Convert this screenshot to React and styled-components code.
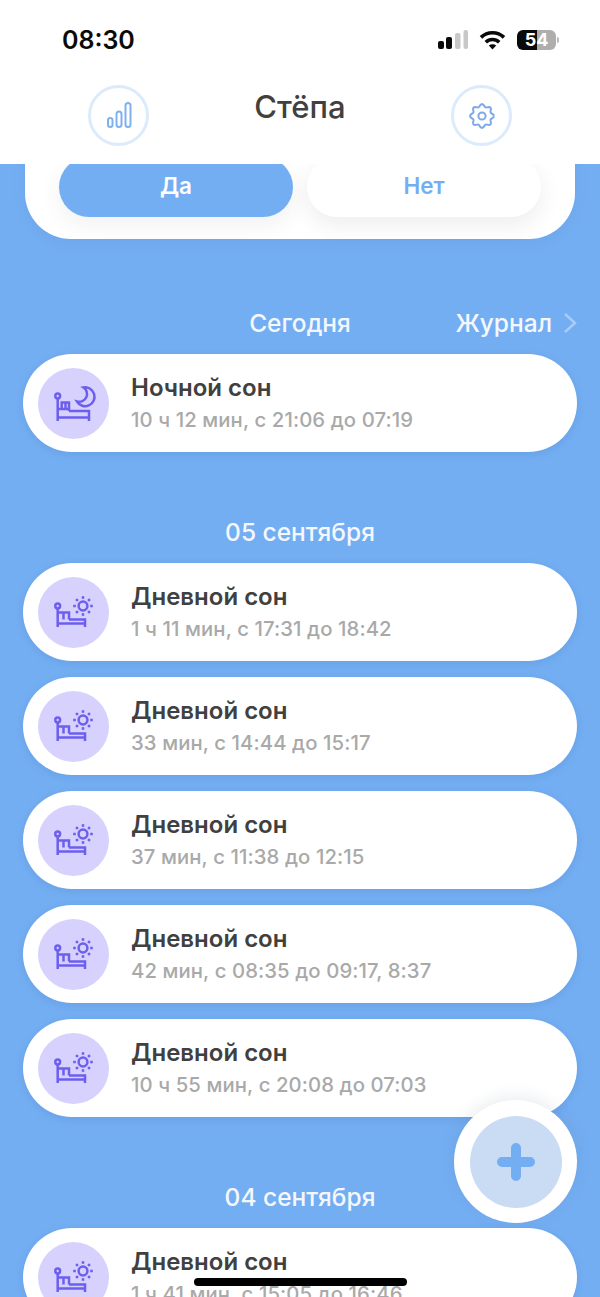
import React from "react";
import styled, { createGlobalStyle } from "styled-components";

const GlobalStyle = createGlobalStyle`
  html, body {
    margin: 0;
    padding: 0;
    overflow: hidden;
    background: #74aef2;
    font-family: "Inter", "Liberation Sans", sans-serif;
  }
`;

const Screen = styled.div`
  position: relative;
  width: 600px;
  height: 1297px;
  overflow: hidden;
  display: flex;
  flex-direction: column;
  background: #74aef2;
`;

const Header = styled.header`
  position: relative;
  z-index: 2;
  flex: 0 0 164px;
  background: #ffffff;
`;

const StatusBar = styled.div`
  height: 80px;
  padding: 0 44px 0 62px;
  display: flex;
  align-items: center;
  justify-content: space-between;
`;

const Clock = styled.span`
  font-size: 25px;
  font-weight: 600;
  color: #0a0a0a;
`;

const StatusIcons = styled.div`
  display: flex;
  align-items: center;
  gap: 11px;
`;

const Battery = styled.div`
  position: relative;
  width: 39px;
  height: 20px;
  border-radius: 6px;
  background: linear-gradient(90deg, #0a0a0a ${props => props.level}%, #aeaeae ${props => props.level}%);
  color: #ffffff;
  font-size: 18px;
  font-weight: 700;
  line-height: 20px;
  text-align: center;

  &::after {
    content: "";
    position: absolute;
    right: -3px;
    top: 7px;
    width: 2px;
    height: 6px;
    border-radius: 0 2px 2px 0;
    background: #b8b8b8;
  }
`;

const Nav = styled.nav`
  padding: 5px 88px 0;
  display: flex;
  justify-content: space-between;
  align-items: flex-start;
`;

const RoundButton = styled.button`
  width: 61px;
  height: 61px;
  padding: 0;
  box-sizing: border-box;
  border: 3px solid #dcebfb;
  border-radius: 50%;
  background: #ffffff;
  display: flex;
  align-items: center;
  justify-content: center;
`;

const Title = styled.h1`
  margin: 0;
  font-size: 31px;
  line-height: 44px;
  font-weight: 500;
  color: #404040;
`;

const Content = styled.main`
  flex: 1;
  min-height: 0;
  padding: 0 23px;
  display: flex;
  flex-direction: column;
`;

const Panel = styled.section`
  margin: -20px 2px 0;
  padding: 13px 34px 22px;
  display: flex;
  gap: 14px;
  background: #ffffff;
  border-radius: 0 0 46px 46px;
  box-shadow: 0 4px 14px rgba(50, 90, 150, 0.08);
`;

const Choice = styled.button`
  flex: 1;
  height: 60px;
  padding: 0 0 3px;
  border: none;
  border-radius: 30px;
  font-family: inherit;
  font-size: 22.5px;
  font-weight: 600;
  background: ${props => (props.active ? "#74aef2" : "#ffffff")};
  color: ${props => (props.active ? "#ffffff" : "#74aef2")};
  box-shadow: ${props => (props.active ? "0 8px 22px rgba(60, 60, 60, 0.07)" : "0 8px 22px rgba(60, 60, 60, 0.09)")};
`;

const Section = styled.section`
  margin-top: ${props => props.gap}px;
  display: flex;
  flex-direction: column;
  gap: 16px;
`;

const SectionHead = styled.div`
  height: 30px;
  display: grid;
  grid-template-columns: 1fr auto 1fr;
  align-items: center;
  color: #ffffff;
  font-size: 24.5px;
  font-weight: 500;
`;

const SectionDate = styled.span`
  grid-column: 2;
  color: #f4f8fe;
`;

const JournalLink = styled.a`
  justify-self: end;
  display: flex;
  align-items: center;
  gap: 11px;
  color: #f4f8fe;
`;

const Rows = styled.div`
  display: flex;
  flex-direction: column;
  gap: 16px;
`;

const Row = styled.article`
  flex: 0 0 98px;
  height: 98px;
  padding-left: 15px;
  display: flex;
  align-items: center;
  gap: 22px;
  background: #ffffff;
  border-radius: 49px;
  box-shadow: 0 2px 8px rgba(40, 90, 160, 0.16);
`;

const Avatar = styled.div`
  flex: 0 0 71px;
  height: 71px;
  border-radius: 50%;
  background: #d6d1fd;
`;

const RowText = styled.div`
  display: flex;
  flex-direction: column;
  gap: 1px;
`;

const RowTitle = styled.div`
  font-size: 24px;
  line-height: 32px;
  font-weight: 600;
  color: #404040;
`;

const RowMeta = styled.div`
  font-size: 20.3px;
  line-height: 29px;
  font-weight: 500;
  letter-spacing: 0.1px;
  color: #a9a9a9;
`;

const Fab = styled.button`
  position: absolute;
  z-index: 3;
  left: 454px;
  top: 1100px;
  width: 123px;
  height: 123px;
  padding: 0;
  border: none;
  border-radius: 50%;
  background: #ffffff;
  box-shadow: 0 -4px 16px rgba(60, 80, 110, 0.1);
  display: flex;
  align-items: center;
  justify-content: center;
`;

const FabInner = styled.span`
  width: 92px;
  height: 92px;
  border-radius: 50%;
  background: #c9dcf3;
  display: flex;
  align-items: center;
  justify-content: center;
`;

const HomeBar = styled.div`
  position: absolute;
  z-index: 4;
  left: 194px;
  bottom: 11px;
  width: 213px;
  height: 8px;
  border-radius: 4px;
  background: #000000;
`;

const SignalIcon = () => (
  <svg width="30" height="20" viewBox="0 0 30 20">
    <rect x="0" y="11" width="6" height="8" rx="2" fill="#0a0a0a" />
    <rect x="8" y="7" width="6" height="12" rx="2" fill="#0a0a0a" />
    <rect x="17" y="3" width="5.5" height="16" rx="2" fill="#c8c8c8" />
    <rect x="25.5" y="0" width="4.5" height="19" rx="2" fill="#c8c8c8" />
  </svg>
);

const WifiIcon = () => (
  <svg width="27" height="20" viewBox="0 0 27 20" fill="none" stroke="#0a0a0a" strokeWidth="3.6">
    <path d="M2 7.4C8.4 1.2 18.6 1.2 25 7.4" />
    <path d="M6.8 12.2C10.6 8.6 16.4 8.6 20.2 12.2" />
    <path d="M13.5 19.5L9.8 15.6C12 13.7 15 13.7 17.2 15.6Z" fill="#0a0a0a" stroke="none" />
  </svg>
);

const BarsIcon = () => (
  <svg width="26" height="27" viewBox="0 0 26 27" fill="none" stroke="#7fb2ec" strokeWidth="2">
    <rect x="2" y="16" width="4.5" height="9" rx="2.25" />
    <rect x="10.5" y="9.5" width="5" height="15.5" rx="2.5" />
    <rect x="19.5" y="1" width="5" height="24" rx="2.5" />
  </svg>
);

// scalloped outline, eight lobes
const gearPath = Array.from({ length: 97 }, (_, i) => {
  const a = (i / 96) * Math.PI * 2;
  const r = 10.6 + 1.3 * Math.cos(8 * a);
  const x = 13 + r * Math.cos(a);
  const y = 13 + r * Math.sin(a);
  return `${i === 0 ? "M" : "L"}${x.toFixed(2)} ${y.toFixed(2)}`;
}).join(" ");

const GearIcon = () => (
  <svg width="26" height="26" viewBox="0 0 26 26" fill="none" stroke="#7fa9e6" strokeWidth="2">
    <path d={gearPath} />
    <circle cx="13" cy="13" r="3.6" />
  </svg>
);

const Chevron = () => (
  <svg width="14" height="22" viewBox="0 0 14 22" fill="none" stroke="#a9cdf7" strokeWidth="2.4">
    <path d="M2 2L12 11L2 20" />
  </svg>
);

const PlusIcon = () => (
  <svg width="40" height="40" viewBox="0 0 40 40" fill="none" stroke="#74aef2" strokeWidth="10" strokeLinecap="round">
    <path d="M20 6V34M6 20H34" />
  </svg>
);

const sunRays = [0, 45, 90, 135, 180, 225, 270, 315];

const MoonBed = () => (
  <g>
    <circle cx="19.7" cy="28" r="2.4" />
    <path d="M19.7 30.4V53M51 53V43H31M19.7 41H31M19.7 49.5H51M23.7 41V34.5H31V43M27.5 34.5V41" />
    <path d="M45.5 19.5A9.4 9.4 0 1 1 39 33.5A7.8 7.8 0 0 0 45.5 19.5Z" />
  </g>
);

const SunBed = () => (
  <g>
    <circle cx="19.7" cy="29" r="2.4" />
    <path d="M19.7 31.4V50M47 50V42.5H31M19.7 46.5H47M19.7 35.5H31V42.5M25.5 35.5V42.5" />
    <circle cx="45" cy="29" r="4.4" />
    {sunRays.map(deg => (
      <path key={deg} d="M45 21.8V19.2" transform={`rotate(${deg} 45 29)`} />
    ))}
  </g>
);

const SleepIcon = ({ night }) => (
  <svg width="71" height="71" viewBox="0 0 71 71" fill="none" stroke="#6c5fee" strokeWidth="2.5">
    {night ? <MoonBed /> : <SunBed />}
  </svg>
);

const SleepRow = ({ night, title, meta }) => (
  <Row>
    <Avatar>
      <SleepIcon night={night} />
    </Avatar>
    <RowText>
      <RowTitle>{title}</RowTitle>
      <RowMeta>{meta}</RowMeta>
    </RowText>
  </Row>
);

const sept5 = [
  "1 ч 11 мин, с 17:31 до 18:42",
  "33 мин, с 14:44 до 15:17",
  "37 мин, с 11:38 до 12:15",
  "42 мин, с 08:35 до 09:17, 8:37",
  "10 ч 55 мин, с 20:08 до 07:03",
];

const App = () => (
  <Screen>
    <GlobalStyle />
    <Header>
      <StatusBar>
        <Clock>08:30</Clock>
        <StatusIcons>
          <SignalIcon />
          <WifiIcon />
          <Battery level={52}>54</Battery>
        </StatusIcons>
      </StatusBar>
      <Nav>
        <RoundButton>
          <BarsIcon />
        </RoundButton>
        <Title>Стёпа</Title>
        <RoundButton>
          <GearIcon />
        </RoundButton>
      </Nav>
    </Header>
    <Content>
      <Panel>
        <Choice active>Да</Choice>
        <Choice>Нет</Choice>
      </Panel>
      <Section gap={69}>
        <SectionHead>
          <SectionDate>Сегодня</SectionDate>
          <JournalLink>
            Журнал
            <Chevron />
          </JournalLink>
        </SectionHead>
        <Rows>
          <SleepRow night title="Ночной сон" meta="10 ч 12 мин, с 21:06 до 07:19" />
        </Rows>
      </Section>
      <Section gap={65}>
        <SectionHead>
          <SectionDate>05 сентября</SectionDate>
        </SectionHead>
        <Rows>
          {sept5.map(meta => (
            <SleepRow key={meta} title="Дневной сон" meta={meta} />
          ))}
        </Rows>
      </Section>
      <Section gap={65}>
        <SectionHead>
          <SectionDate>04 сентября</SectionDate>
        </SectionHead>
        <Rows>
          <SleepRow title="Дневной сон" meta="1 ч 41 мин, с 15:05 до 16:46" />
        </Rows>
      </Section>
    </Content>
    <Fab>
      <FabInner>
        <PlusIcon />
      </FabInner>
    </Fab>
    <HomeBar />
  </Screen>
);

export default App;
